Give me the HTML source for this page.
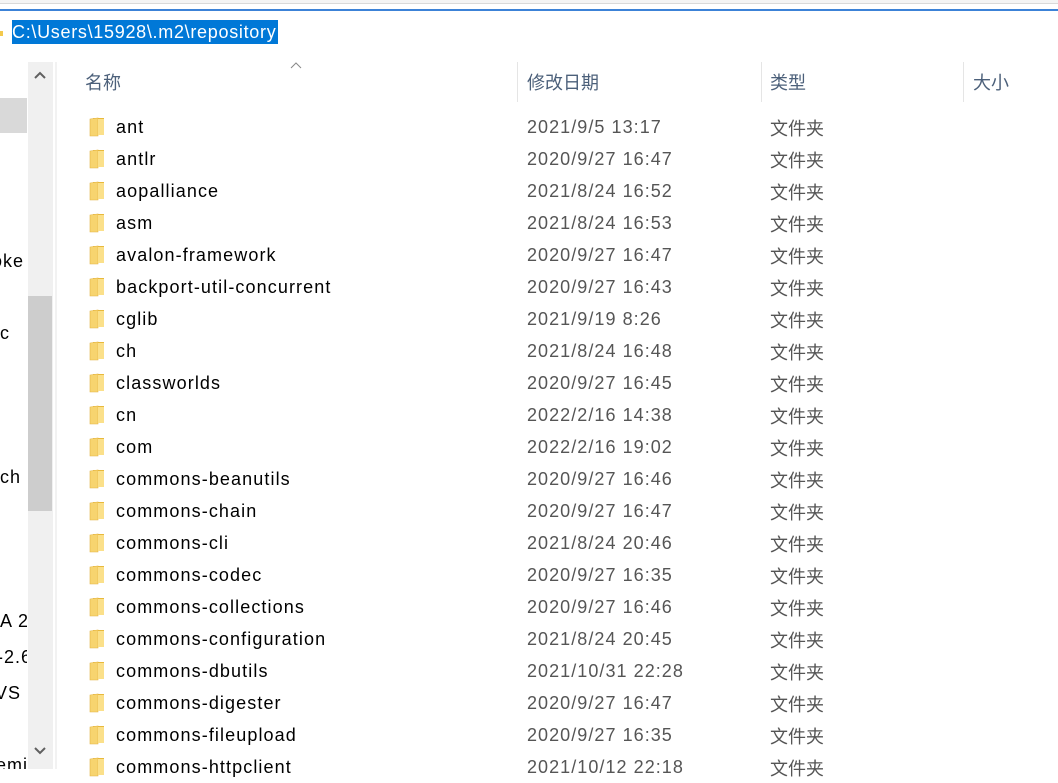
<!DOCTYPE html>
<html><head><meta charset="utf-8"><style>
*{margin:0;padding:0}
body{width:1058px;height:769px;overflow:hidden;background:#fff;position:relative;font-family:"Liberation Sans","Noto Sans CJK SC",sans-serif;}
.a{position:absolute;white-space:nowrap}
.row{position:absolute;left:0;height:32px;width:1058px;font-size:18px;}
.row .n{position:absolute;left:116px;top:6px;color:#000;letter-spacing:1.1px}
.row .d{position:absolute;left:527px;top:6px;color:#555;letter-spacing:1.05px}
.row .t{position:absolute;left:770px;top:4px;color:#555}
.row svg{position:absolute;left:89px;top:6px}
.h{position:absolute;top:69px;font-size:18px;color:#4c607a}
.sep{position:absolute;top:62px;width:1px;height:40px;background:#e5e5e5}
.lt{position:absolute;font-size:18px;color:#000;letter-spacing:1px}
</style></head><body>
<div class="a" style="left:0;top:0;width:1058px;height:3px;background:#f4f4f4"></div>
<div class="a" style="left:0;top:3px;width:1058px;height:1px;background:#d9d9d9"></div>
<div class="a" style="left:0;top:9px;width:1058px;height:2px;background:#3c82d7"></div>
<div class="a" style="left:0;top:31px;width:3px;height:5px;background:#f3c94d"></div>
<div class="a" style="left:12px;top:20px;width:266px;height:24px;background:#0078d7;color:#fff;font-size:18px;line-height:25px;letter-spacing:0.7px">C:\Users\15928\.m2\repository</div>
<div class="a" style="left:0;top:98px;width:27px;height:35px;background:#d9d9d9"></div>
<div class="a" style="left:28px;top:62px;width:25px;height:707px;background:#f0f0f0"></div>
<div class="a" style="left:28px;top:296px;width:24px;height:215px;background:#cdcdcd"></div>
<svg class="a" style="left:33px;top:71px" width="14" height="10"><path d="M2 7 L7 2 L12 7" stroke="#606060" stroke-width="2" fill="none"/></svg>
<svg class="a" style="left:33px;top:746px" width="14" height="10"><path d="M2 2 L7 7 L12 2" stroke="#606060" stroke-width="2" fill="none"/></svg>
<div class="a" style="left:55px;top:62px;width:2px;height:707px;background:#f2f2f2"></div>
<div class="a" style="left:0;top:0;width:27px;height:769px;overflow:hidden">
<div class="lt" style="top:251px;left:-8px">oke</div>
<div class="lt" style="top:323px;left:0px">c</div>
<div class="lt" style="top:467px;left:0px">ch</div>
<div class="lt" style="top:611px;left:0px">A 2</div>
<div class="lt" style="top:647px;left:-3px">-2.6</div>
<div class="lt" style="top:683px;left:-5px">VS (</div>
<div class="lt" style="top:755px;left:-4px">emi</div>
</div>
<svg class="a" style="left:289px;top:61px" width="14" height="8"><path d="M2 7 L7 2 L12 7" stroke="#888" stroke-width="1" fill="none"/></svg>
<div class="h" style="left:85px">名称</div>
<div class="sep" style="left:517px"></div>
<div class="h" style="left:527px">修改日期</div>
<div class="sep" style="left:761px"></div>
<div class="h" style="left:770px">类型</div>
<div class="sep" style="left:963px"></div>
<div class="h" style="left:973px">大小</div>
<div id="rows"></div>
<script>
var d=[["ant","2021/9/5 13:17"],["antlr","2020/9/27 16:47"],["aopalliance","2021/8/24 16:52"],["asm","2021/8/24 16:53"],["avalon-framework","2020/9/27 16:47"],["backport-util-concurrent","2020/9/27 16:43"],["cglib","2021/9/19 8:26"],["ch","2021/8/24 16:48"],["classworlds","2020/9/27 16:45"],["cn","2022/2/16 14:38"],["com","2022/2/16 19:02"],["commons-beanutils","2020/9/27 16:46"],["commons-chain","2020/9/27 16:47"],["commons-cli","2021/8/24 20:46"],["commons-codec","2020/9/27 16:35"],["commons-collections","2020/9/27 16:46"],["commons-configuration","2021/8/24 20:45"],["commons-dbutils","2021/10/31 22:28"],["commons-digester","2020/9/27 16:47"],["commons-fileupload","2020/9/27 16:35"],["commons-httpclient","2021/10/12 22:18"]];
var h="";
var ic='<svg width="17" height="20" viewBox="0 0 17 20"><path d="M4 1 L15 1 L15 18 L4 18 Z" fill="#e8b93c"/><path d="M1 2 L9 1 L9 19 L1 19 Z" fill="#f7d46f"/><path d="M1 2 L9 1 L9 19 L1 19 Z" fill="none" stroke="#e3b443" stroke-width="0.6"/><rect x="9" y="2" width="6" height="16" fill="#fbe08a"/></svg>';
for(var i=0;i<d.length;i++){h+='<div class="row" style="top:'+(111+32*i)+'px">'+ic+'<div class="n">'+d[i][0]+'</div><div class="d">'+d[i][1]+'</div><div class="t">文件夹</div></div>';}
document.getElementById("rows").innerHTML=h;
</script>
</body></html>
